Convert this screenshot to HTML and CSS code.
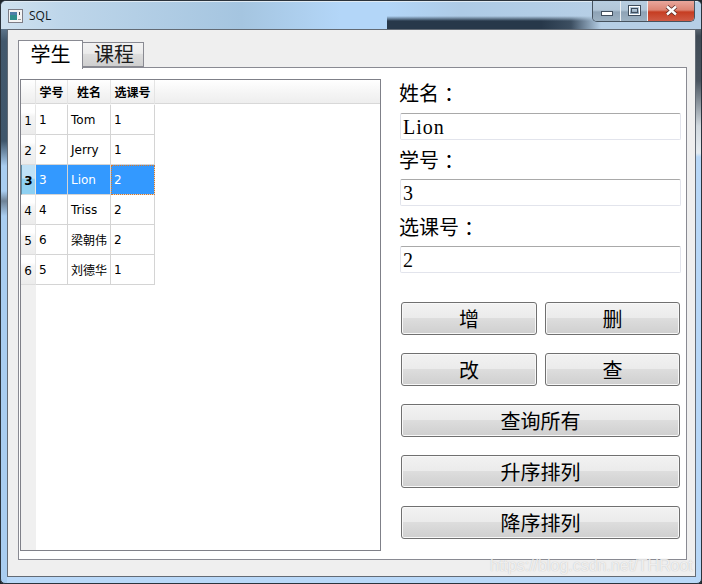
FILE: index.html
```html
<!DOCTYPE html>
<html lang="zh-CN">
<head>
<meta charset="utf-8">
<title>SQL</title>
<link rel="stylesheet" href="styles.css">
</head>
<body>
<div class="window">
  <header class="titlebar">
    <svg class="app-icon" width="15" height="14" viewBox="0 0 15 14">
      <rect x="0.5" y="0.5" width="14" height="13" fill="#f4f4f4" stroke="#7d7d86"/>
      <rect x="2" y="3" width="7" height="8" fill="#2f8f8c"/>
      <rect x="2" y="3" width="7" height="3" fill="#4d7fa8"/>
      <rect x="11" y="3" width="1" height="3" fill="#4a4a4a"/>
      <rect x="10" y="10" width="3" height="1" fill="#9a9a9a"/>
    </svg>
    <span class="title">SQL</span>
    <div class="controls">
      <div class="ctl ctl-min">
        <svg width="12" height="6" viewBox="0 0 12 6"><rect x="0.5" y="0.5" width="11" height="4" fill="#fff" stroke="#3f4d5c"/></svg>
      </div>
      <div class="ctl ctl-max">
        <svg width="13" height="11" viewBox="0 0 13 11"><rect x="0.5" y="0.5" width="12" height="10" fill="none" stroke="#3f4d5c"/><rect x="1.5" y="1.5" width="10" height="8" fill="none" stroke="#fff"/><rect x="3.5" y="3.5" width="6" height="4" fill="none" stroke="#3f4d5c"/></svg>
      </div>
      <div class="ctl ctl-close">
        <svg width="13" height="11" viewBox="0 0 13 11"><path d="M2 1.5 L11 9.5 M11 1.5 L2 9.5" stroke="#5a2a24" stroke-width="4" fill="none"/><path d="M2 1.5 L11 9.5 M11 1.5 L2 9.5" stroke="#fff" stroke-width="2.4" fill="none"/></svg>
      </div>
    </div>
  </header>

  <main class="client">
    <div class="tabs">
      <div class="tab tab-active">学生</div>
      <div class="tab">课程</div>
    </div>
    <section class="pane">
      <div class="table-view">
        <table class="grid">
          <thead>
            <tr><th class="corner"></th><th class="c1">学号</th><th class="c2">姓名</th><th class="c3">选课号</th></tr>
          </thead>
          <tbody>
            <tr><th>1</th><td>1</td><td>Tom</td><td>1</td></tr>
            <tr><th>2</th><td>2</td><td>Jerry</td><td>1</td></tr>
            <tr class="selected"><th>3</th><td>3</td><td>Lion</td><td class="current">2</td></tr>
            <tr><th>4</th><td>4</td><td>Triss</td><td>2</td></tr>
            <tr><th>5</th><td>6</td><td>梁朝伟</td><td>2</td></tr>
            <tr><th>6</th><td>5</td><td>刘德华</td><td>1</td></tr>
          </tbody>
        </table>
      </div>
      <div class="side">
        <div class="field"><label class="label">姓名<span class="colon">：</span></label><input class="input" value="Lion" readonly></div>
        <div class="field"><label class="label">学号<span class="colon">：</span></label><input class="input" value="3" readonly></div>
        <div class="field field-wide"><label class="label">选课号<span class="colon">：</span></label><input class="input" value="2" readonly></div>
        <div class="buttons">
          <button class="btn">增</button>
          <button class="btn">删</button>
          <button class="btn">改</button>
          <button class="btn">查</button>
          <button class="btn btn-full">查询所有</button>
          <button class="btn btn-full">升序排列</button>
          <button class="btn btn-full">降序排列</button>
        </div>
      </div>
    </section>
  </main>
  <div class="watermark">https://blog.csdn.net/THRoot</div>
</div>
</body>
</html>
```

FILE: styles.css
```css
html, body {
  margin: 0;
  padding: 0;
  background: #20262c;
}

.window {
  position: relative;
  box-sizing: border-box;
  width: 702px;
  height: 584px;
  overflow: hidden;
  display: flex;
  flex-direction: column;
  border: 1px solid #2b333c;
  border-radius: 6px 6px 5px 5px;
  background:
    linear-gradient(180deg, #9db6cc 0, #42586c 40px, #3f566b 140px, #a9cdf0 165px, #a9cdf0 190px, #6e8296 200px, #a9cdf0 215px) left top / 6px 100% no-repeat,
    linear-gradient(180deg, #c8d6e2 0, #3f4a55 35px, #4a5560 80px, #d0d8de 125px, #e4ebf0 152px, #b7d7f7 156px) right top / 6px 100% no-repeat,
    #b9d8f8;
  font-family: "Noto Sans CJK SC", sans-serif;
  color: #000;
}

.titlebar {
  box-sizing: border-box;
  height: 28px;
  flex: none;
  display: flex;
  align-items: flex-start;
  padding: 0 6px 0 7px;
  border-top: 1px solid #dfeaf3;
  background:
    linear-gradient(90deg, rgba(182, 207, 230, 0) 0, rgba(182, 207, 230, 0.15) 30px, #b6cfe6 60px) 540px 0 / 160px 100% no-repeat,
    linear-gradient(180deg, rgba(36, 52, 70, 0) 0, #27384a 5px) 386px 14px / 220px 13px no-repeat,
    linear-gradient(90deg, #cfe1ef 0, #bed6ea 60px, #a5c5e0 240px, #b3d6f8 340px, #b3d6f8 386px, #aecbe6 460px, #b6cfe6 600px, #b3cce2 100%);
}

.app-icon {
  margin-top: 7px;
  flex: none;
}

.title {
  margin: 5px 0 0 6px;
  font: 12px/18px "Open Sans", sans-serif;
  color: #101820;
}

.controls {
  margin-left: auto;
  display: flex;
  height: 20px;
  margin-top: -1px;
  border: 1px solid #46535f;
  border-top: 0;
  border-radius: 0 0 5px 5px;
  overflow: hidden;
}

.ctl {
  box-sizing: border-box;
  display: flex;
  align-items: center;
  justify-content: center;
  border-right: 1px solid #e8eef3;
}

.ctl-min {
  width: 28px;
  padding-top: 6px;
  background: linear-gradient(180deg, #b7cde0 0, #b2c6d8 45%, #8ea3b6 55%, #9db1c2 100%);
}

.ctl-max {
  width: 27px;
  padding-bottom: 2px;
  background: linear-gradient(180deg, #b7cde0 0, #b2c6d8 45%, #8ea3b6 55%, #9db1c2 100%);
}

.ctl-close {
  width: 46px;
  border-right: 0;
  padding-bottom: 2px;
  background: linear-gradient(180deg, #e9a79c 0, #dc8473 45%, #c63d22 55%, #cf5b45 100%);
}

.client {
  box-sizing: border-box;
  flex: none;
  height: 548px;
  margin: 0 5px 0 6px;
  padding: 10px 8px 16px 10px;
  border: 1px solid #636b75;
  background: #efefef;
  display: flex;
  flex-direction: column;
}

.tabs {
  display: flex;
  align-items: flex-start;
  height: 27px;
  flex: none;
  position: relative;
  z-index: 1;
}

.tab {
  box-sizing: border-box;
  width: 61px;
  height: 25px;
  margin-top: 2px;
  padding-left: 2px;
  border: 1px solid #898a92;
  border-left: 0;
  text-align: center;
  font-size: 20px;
  line-height: 21px;
  color: #1c1c1c;
  background: linear-gradient(180deg, #f2f2f2 0, #ebebeb 45%, #dddddd 50%, #cfcfcf 100%);
}

.tab-active {
  width: 65px;
  height: 29px;
  margin-top: 0;
  padding-left: 0;
  border: 1px solid #898a92;
  border-bottom: 0;
  line-height: 25px;
  color: #000;
  background: #fff;
}

.pane {
  box-sizing: border-box;
  flex: 1;
  display: flex;
  border: 1px solid #898a92;
  background: #fff;
  padding: 11px 5px 8px 1px;
}

.table-view {
  box-sizing: border-box;
  width: 361px;
  flex: none;
  border: 1px solid #7f8088;
  background:
    linear-gradient(180deg, #ffffff 0, #f4f4f4 60%, #eeeeee 100%) left top / 100% 23px no-repeat,
    linear-gradient(0deg, #d8d8d8, #d8d8d8) left 23px / 100% 1px no-repeat,
    linear-gradient(90deg, #f0f0f0 15px, #ffffff 15px);
}

.grid {
  border-collapse: separate;
  border-spacing: 0;
  table-layout: fixed;
  width: 134px;
  font-family: "DejaVu Sans", "Noto Sans CJK SC", sans-serif;
  font-size: 12px;
}

.grid thead th {
  height: 25px;
  padding: 0;
  box-sizing: border-box;
  font: bold 12px/24px "Noto Sans CJK SC", sans-serif;
  text-align: center;
  border-right: 1px solid #e4e4e4;
  border-bottom: 1px solid #ffffff;
  vertical-align: top;
}

.grid .corner { width: 15px; }
.grid .c1 { width: 32px; }
.grid .c2 { width: 43px; }
.grid .c3 { width: 44px; }

.grid tbody th {
  box-sizing: border-box;
  height: 30px;
  padding: 2px 0 0;
  font-weight: normal;
  text-align: center;
  border-right: 1px solid #e6e6e6;
  border-bottom: 1px solid #dcdcdc;
  background: linear-gradient(180deg, #ffffff 0, #ffffff 25%, #f4f4f4 40%, #ececec 100%);
}

.grid td {
  box-sizing: border-box;
  height: 30px;
  padding: 0 0 0 3px;
  background: #fff;
  white-space: nowrap;
  overflow: hidden;
  border-right: 1px solid #d4d4d4;
  border-bottom: 1px solid #d4d4d4;
}

.grid .selected td {
  background: #3399ff;
  color: #fff;
}

.grid .selected th {
  font-weight: bold;
  border-left: 1px solid #5e8ea8;
  background: linear-gradient(180deg, #bfe1f6 0, #bfe1f6 45%, #8ed0f2 50%, #8ed0f2 100%);
}

.grid .selected .current {
  outline: 1px dotted #d8782a;
  outline-offset: -1px;
}

.side {
  margin-left: 19px;
  width: 281px;
  display: flex;
  flex-direction: column;
}

.field {
  display: flex;
  flex-direction: column;
}

.label {
  height: 39px;
  margin-left: -1px;
  padding-top: 8px;
  box-sizing: border-box;
  font-size: 20px;
  line-height: 24px;
}

.field:first-child .label {
  height: 34px;
  padding-top: 2px;
}

.field-wide .label {
  height: 40px;
  padding-top: 9px;
}

.colon {
  padding-left: 5px;
}

.input {
  box-sizing: border-box;
  width: 281px;
  height: 27px;
  margin: 0;
  padding: 2px 2px 0;
  border: 1px solid #e2e4ec;
  border-top-color: #a9a9a9;
  border-radius: 2px;
  background: #fff;
  outline: 0;
  color: #000;
  letter-spacing: 1px;
  font: 20px/23px "Liberation Serif", serif;
}

.buttons {
  display: grid;
  grid-template-columns: 136px 135px;
  grid-auto-rows: 33px;
  gap: 18px 8px;
  margin: 29px 0 0 1px;
}

.btn {
  box-sizing: border-box;
  margin: 0;
  padding: 0;
  border: 1px solid #707070;
  border-radius: 3px;
  box-shadow: inset 0 0 0 1px #f8f8f8;
  background: linear-gradient(180deg, #f2f2f2 0, #ebebeb 47%, #dddddd 50%, #cfcfcf 100%);
  color: #000;
  font: 20px/28px "Noto Sans CJK SC", sans-serif;
}

.btn-full {
  grid-column: 1 / -1;
}

.watermark {
  position: absolute;
  left: 489px;
  top: 555px;
  font: 16px/19px "Liberation Sans", sans-serif;
  color: rgba(255, 255, 255, 0.75);
  text-shadow: 0 0 1px rgba(130, 130, 130, 0.5);
  white-space: nowrap;
}
```
